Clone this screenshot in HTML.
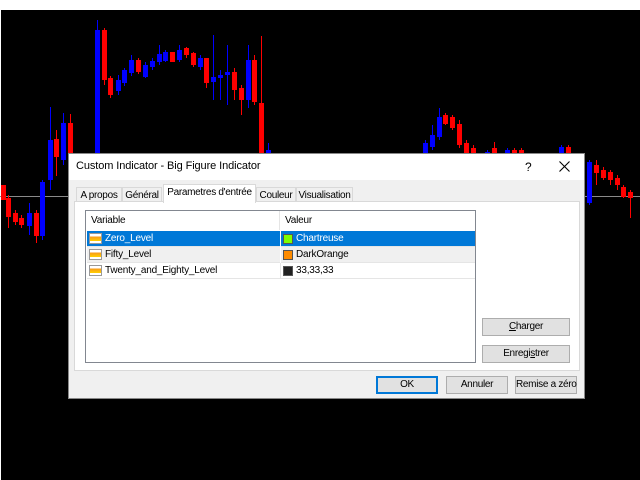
<!DOCTYPE html>
<html><head><meta charset="utf-8"><style>
*{margin:0;padding:0;box-sizing:border-box}
body{width:640px;height:480px;background:#000;position:relative;overflow:hidden;font-family:"Liberation Sans",sans-serif;font-size:10px;letter-spacing:-0.2px;color:#000}
.top{position:absolute;left:0;top:0;width:640px;height:10px;background:#fff}
.lft{position:absolute;left:0;top:0;width:1px;height:480px;background:#fff}
.hl{position:absolute;left:0;top:196px;width:640px;height:1px;background:#8a8a8a}
.c{position:absolute}
#dlg{position:absolute;left:68px;top:153px;width:517px;height:246px;background:#f0f0f0;border:1px solid #888}
.tb{position:absolute;left:0;top:0;width:100%;height:26px;background:#fff}
.ttl{position:absolute;left:7px;top:6px;font-size:11px;letter-spacing:-0.1px}
.tab{position:absolute;top:33px;height:15px;border:1px solid #d9d9d9;border-bottom:none;background:#f0f0f0;text-align:center;padding-top:2px;white-space:nowrap;font-size:10px;letter-spacing:-0.3px}
.panel{position:absolute;left:5px;top:47px;width:506px;height:170px;background:#fff;border:1px solid #d9d9d9}
.list{position:absolute;left:10px;top:8px;width:391px;height:153px;border:1px solid #828790;background:#fff}
.row{position:absolute;left:1px;width:388px;height:16px;border-bottom:1px solid #e5e5e5}
.row span{position:absolute;top:2px;white-space:nowrap}
.ico{position:absolute;left:2px;top:2px;width:13px;height:11px;border:1px solid #999;background:linear-gradient(#fff 0,#fff 25%,#f7941d 25%,#ffd200 80%,#fff 80%)}
.sw{position:absolute;left:196px;top:3px;width:10px;height:10px;border:1px solid #555}
.btn{position:absolute;height:18px;background:#e1e1e1;border:1px solid #adadad;text-align:center;line-height:16px;font-size:10px;white-space:nowrap;letter-spacing:-0.3px}
</style></head><body>
<div class="top"></div><div class="lft"></div>
<div class="hl"></div>
<div id="ch"></div>
<div id="dlg">
 <div class="tb"><div class="ttl">Custom Indicator - Big Figure Indicator</div>
  <div style="position:absolute;left:456px;top:6px;font-size:12px">?</div>
  <svg style="position:absolute;left:490px;top:7px" width="11" height="11"><path d="M0.5 0.5L10.5 10.5M10.5 0.5L0.5 10.5" stroke="#000" stroke-width="1.1"/></svg></div>
 <div class="tab" style="left:7px;width:46px">A propos</div>
 <div class="tab" style="left:53px;width:40px">Général</div>
 <div class="tab" style="left:94px;top:30px;height:19px;width:93px;background:#fff;border-color:#d9d9d9;z-index:2">Parametres d'entrée</div>
 <div class="tab" style="left:187px;width:40px">Couleur</div>
 <div class="tab" style="left:227px;width:57px">Visualisation</div>
 <div class="panel">
  <div class="list">
   <div style="position:absolute;left:5px;top:4px">Variable</div>
   <div style="position:absolute;left:193px;top:0;width:1px;height:19px;background:#e5e5e5"></div>
   <div style="position:absolute;left:199px;top:4px">Valeur</div>
   <div class="row" style="top:20px;background:#0078d7;color:#fff"><div class="ico"></div><span style="left:18px">Zero_Level</span><div style="position:absolute;left:193px;top:0;width:1px;height:16px;background:#fff"></div><div class="sw" style="background:#7fff00"></div><span style="left:209px">Chartreuse</span></div>
   <div class="row" style="top:36px;background:#f0f0f0"><div class="ico"></div><span style="left:18px">Fifty_Level</span><div style="position:absolute;left:193px;top:0;width:1px;height:16px;background:#fff"></div><div class="sw" style="background:#ff8c00"></div><span style="left:209px">DarkOrange</span></div>
   <div class="row" style="top:52px"><div class="ico"></div><span style="left:18px">Twenty_and_Eighty_Level</span><div style="position:absolute;left:193px;top:0;width:1px;height:16px;background:#e5e5e5"></div><div class="sw" style="background:#212121"></div><span style="left:209px">33,33,33</span></div>
  </div>
  <div class="btn" style="left:407px;top:116px;width:88px"><u>C</u>harger</div>
  <div class="btn" style="left:407px;top:143px;width:88px">Enregi<u>s</u>trer</div>
 </div>
 <div class="btn" style="left:307px;top:222px;width:62px;border:2px solid #0078d7;line-height:14px">OK</div>
 <div class="btn" style="left:377px;top:222px;width:62px">Annuler</div>
 <div class="btn" style="left:446px;top:222px;width:62px">Remise a zéro</div>
</div>
<script>
var d=[[2,185,200,185,200,0],[7,195,228,198,217,0],[14,210,225,213,222,0],[20,215,228,218,225,0],[28,203,235,213,226,1],[35,210,243,213,236,0],[41,180,240,182,236,1],[49,107,190,140,180,1],[55,130,176,139,157,0],[62,113,165,123,160,1],[69,114,160,123,158,0],[96,20,200,30,200,1],[103,28,85,30,80,0],[109,76,98,78,95,0],[117,75,95,80,91,1],[123,68,86,70,83,1],[130,55,76,60,73,1],[137,58,74,60,72,0],[144,62,78,65,77,1],[151,58,70,61,67,1],[158,45,65,54,62,1],[164,50,62,52,61,1],[171,52,62,52,62,0],[178,45,62,50,60,1],[185,47,58,48,55,0],[192,52,67,53,65,0],[199,55,70,58,67,1],[205,58,88,58,83,0],[212,35,100,77,82,1],[219,70,100,75,78,1],[226,45,105,72,75,1],[233,68,100,72,90,0],[240,85,115,88,100,0],[247,45,108,60,100,1],[253,55,105,60,102,0],[260,36,160,103,160,0],[267,143,160,150,160,1],[424,140,160,143,160,1],[431,125,150,135,147,1],[438,108,140,117,137,1],[444,113,125,115,124,0],[451,115,130,117,128,0],[458,120,148,124,145,0],[465,140,160,143,155,0],[472,145,160,148,155,0],[486,150,160,152,160,1],[493,142,160,148,160,0],[506,148,160,150,160,1],[513,148,160,150,155,0],[520,148,160,150,155,0],[560,145,160,147,160,1],[567,145,160,147,160,0],[588,160,205,162,203,1],[595,160,185,165,173,0],[602,167,180,170,178,0],[609,170,185,172,180,0],[616,175,190,178,185,0],[622,185,198,187,197,0],[629,190,218,192,198,0]];
var h='';d.forEach(function(a){var col=a[5]?'#0000ff':'#ff0000';
h+='<div class="c" style="left:'+(a[0]+1)+'px;top:'+a[1]+'px;width:1px;height:'+(a[2]-a[1])+'px;background:'+col+'"></div>';
h+='<div class="c" style="left:'+(a[0]-1)+'px;top:'+a[3]+'px;width:5px;height:'+Math.max(2,a[4]-a[3])+'px;background:'+col+'"></div>';});
document.getElementById('ch').innerHTML=h;
</script>
</body></html>
